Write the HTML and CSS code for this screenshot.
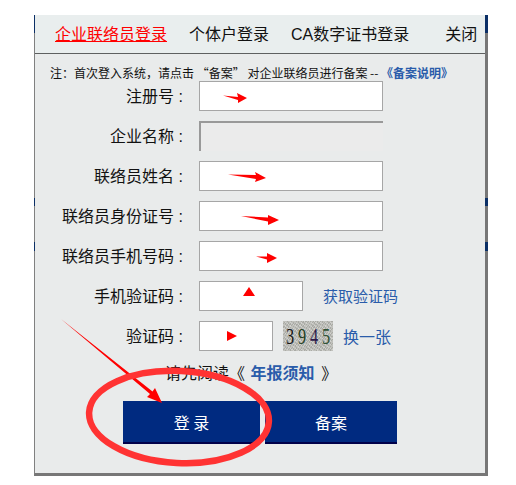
FILE: index.html
```html
<!DOCTYPE html>
<html lang="zh">
<head>
<meta charset="utf-8">
<title>企业联络员登录</title>
<link rel="stylesheet" href="styles.css">
</head>
<body>
<div class="dialog">
  <span class="edge edge-l1"></span><span class="edge edge-l2"></span><span class="edge edge-l3"></span>
  <span class="edge edge-r1"></span><span class="edge edge-r2"></span><span class="edge edge-r3"></span>
  <nav class="tabs">
    <a class="tab active">企业联络员登录</a>
    <a class="tab">个体户登录</a>
    <a class="tab">CA数字证书登录</a>
    <a class="tab close">关闭</a>
  </nav>
  <p class="note">注：首次登入系统，请点击 “备案” 对企业联络员进行备案 -- <a class="note-link">《备案说明》</a></p>
  <form class="form">
    <div class="row"><label class="label">注册号 :</label><span class="input"></span></div>
    <div class="row"><label class="label">企业名称 :</label><span class="input disabled"></span></div>
    <div class="row"><label class="label">联络员姓名 :</label><span class="input"></span></div>
    <div class="row"><label class="label">联络员身份证号 :</label><span class="input"></span></div>
    <div class="row"><label class="label">联络员手机号码 :</label><span class="input"></span></div>
    <div class="row"><label class="label">手机验证码 :</label><span class="input medium"></span><a class="link sms">获取验证码</a></div>
    <div class="row"><label class="label">验证码 :</label><span class="input short"></span>
      <span class="captcha"><b>3</b><b>9</b><b>4</b><b>5</b></span><a class="link swap">换一张</a></div>
  </form>
  <p class="notice">请先阅读《 <a class="notice-link">年报须知</a> 》</p>
  <div class="actions">
    <button class="btn login" type="button">登 录</button>
    <button class="btn record" type="button">备案</button>
  </div>
</div>
<svg class="marks" width="516" height="485" viewBox="0 0 516 485" aria-hidden="true">
  <g fill="#ff0000">
    <path d="M223 95.500 L238 97 L237 93 L247 98 L238 103 L238 100 Z"/>
    <path d="M228 174.500 L256 175 L255 172 L266 178 L255 182 L256 179 Z"/>
    <path d="M241 216 L268 217.500 L268 215 L279 220 L268 225 L268 221.500 Z"/>
    <path d="M256 256.500 L267 256.500 L267 253 L277 258 L267 263 L267 259.500 Z"/>
    <path d="M249 287 L255 296 L243 296 Z"/>
    <path d="M227 331 L237 336 L227 341 Z"/>
    <path d="M61 319 L152.500 391.500 L155 388 L162 403 L147 397 L150 394 Z"/>
  </g>
  <ellipse class="ring" cx="179" cy="417" rx="90" ry="46" transform="rotate(3 179 417)"/>
</svg>
</body>
</html>
```
FILE: styles.css
```css
* { box-sizing: border-box; }
html, body { margin: 0; padding: 0; background: #fff; }
body {
  width: 516px;
  height: 485px;
  overflow: hidden;
  position: relative;
  font-family: "Noto Sans CJK SC", "Liberation Sans", sans-serif;
  color: #111;
}
.dialog {
  position: relative;
  margin: 15px 0 0 34px;
  width: 454px;
  height: 461px;
  background: #e9ebeb;
  border-left: 1px solid #808080;
  border-right: 3px solid #777;
  border-bottom: 3px solid #777;
}
.edge { position: absolute; background: #0b2f66; }
.edge-l1, .edge-l2, .edge-l3 { left: -1px; width: 1px; }
.edge-r1, .edge-r2, .edge-r3 { right: -3px; width: 3px; }
.edge-l1, .edge-r1 { top: 0; height: 18px; }
.edge-l2, .edge-r2 { top: 183px; height: 8px; }
.edge-l3, .edge-r3 { top: 227px; height: 9px; }
.tabs {
  display: flex;
  align-items: center;
  height: 39px;
  padding: 2px 0 0 20px;
  background: #e9eeee;
  border-bottom: 1px solid #5e6060;
  font-family: "Liberation Sans", "Noto Sans CJK SC", sans-serif;
  font-size: 16px;
  line-height: 22px;
}
.tab { margin-right: 22px; white-space: nowrap; }
.tab.active { color: #ff0000; text-decoration: underline; }
.tab.close { margin: 0 0 0 14px; }
.note {
  margin: 0;
  padding: 11px 0 0 15px;
  height: 27px;
  font-size: 12px;
  line-height: 16px;
  white-space: nowrap;
}
.note-link { color: #2a5caa; font-weight: 700; }
.form { display: flex; flex-direction: column; gap: 10px; }
.row { display: flex; align-items: center; height: 30px; }
.label {
  width: 164px;
  flex: none;
  padding: 2px 16px 0 0;
  text-align: right;
  font-family: "Liberation Sans", "Noto Sans CJK SC", sans-serif;
  font-size: 16px;
  line-height: 22px;
  white-space: nowrap;
}
.input {
  display: block;
  width: 184px;
  height: 30px;
  flex: none;
  background: #fff;
  border: 1px solid #a6a6a6;
}
.input.disabled {
  background: #ebebeb;
  border-style: solid;
  border-width: 2px 0 0 2px;
  border-color: #999;
}
.input.medium { width: 104px; }
.input.short { width: 74px; }
.link { color: #2a5caa; font-size: 15px; line-height: 22px; white-space: nowrap; }
.sms { margin-left: 20px; }
.swap { margin-left: 10px; font-size: 16px; }
.captcha {
  display: grid;
  grid-template-columns: repeat(4, 12px);
  align-items: center;
  justify-items: center;
  width: 50px;
  height: 30px;
  margin-left: 10px;
  padding: 0 1px;
  background:
    repeating-linear-gradient(37deg, rgba(255,255,255,.28) 0 1px, transparent 1px 3px),
    repeating-linear-gradient(-58deg, rgba(90,90,90,.22) 0 1px, transparent 1px 2px),
    #c0c1bb;
  font-family: "Liberation Serif", serif;
  font-size: 24px;
  line-height: 30px;
}
.captcha b { display: block; font-weight: 400; color: #161616; transform: scaleX(.68); }
.captcha b:nth-child(2) { color: #24401f; }
.captcha b:nth-child(3) { color: #2c1a4a; }
.captcha b:nth-child(4) { color: #2f5236; }
.notice {
  margin: 10px 0 0;
  padding-left: 130px;
  height: 22px;
  font-size: 16px;
  line-height: 22px;
  white-space: nowrap;
}
.notice-link { margin: 0 3px 0 2px; color: #2a5caa; font-weight: 700; }
.actions { display: flex; gap: 5px; margin: 18px 0 0 88px; }
.btn {
  height: 43px;
  padding: 0;
  border: 0;
  border-bottom: 2px solid #00004a;
  background: #002a80;
  color: #fff;
  font-family: inherit;
  font-size: 16px;
  white-space: pre;
}
.login { width: 137px; }
.record { width: 132px; }
.marks { position: absolute; left: 0; top: 0; pointer-events: none; }
.ring { fill: none; stroke: #ff3333; stroke-width: 6.500; }
```
